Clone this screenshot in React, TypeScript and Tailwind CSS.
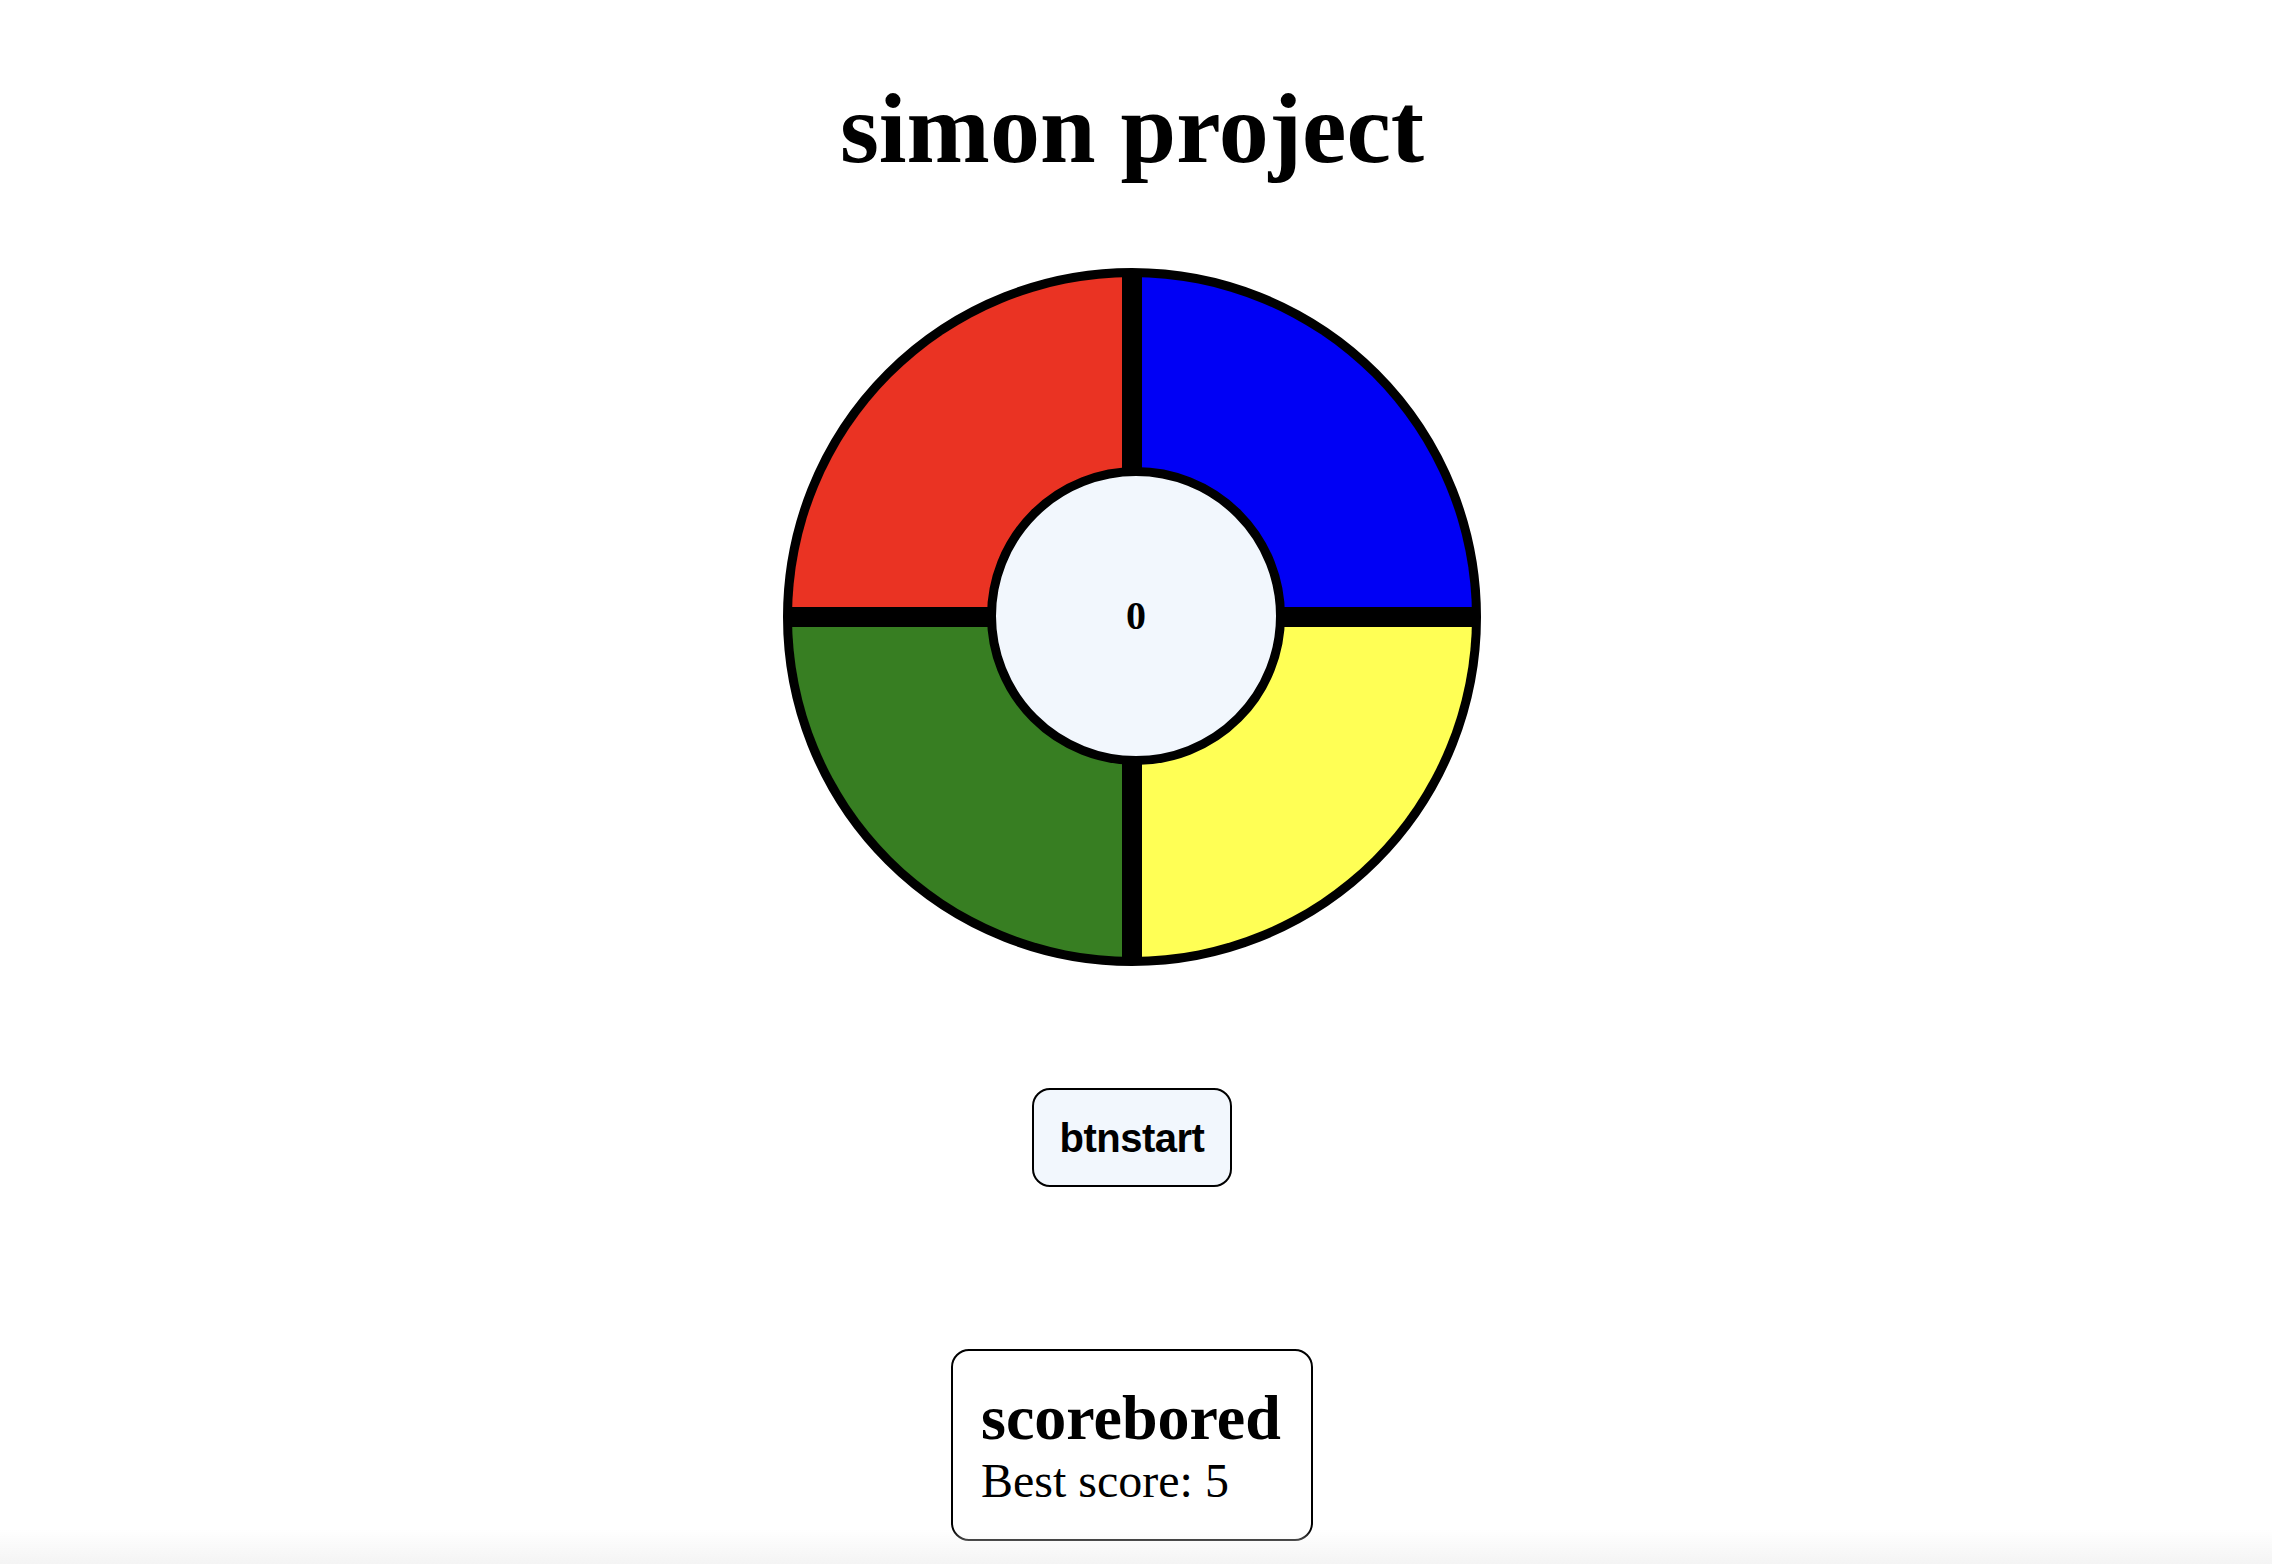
const QUADRANTS = [
  { id: 'red', color: 'bg-[#EA3323]' },
  { id: 'blue', color: 'bg-[#0000F5]' },
  { id: 'green', color: 'bg-[#377E22]' },
  { id: 'yellow', color: 'bg-[#FFFF55]' },
]

export default function App() {
  const level = 0
  const bestScore = 5

  return (
    <div className="relative min-h-screen bg-white font-['Liberation_Serif','Times_New_Roman',serif] text-black">
      <div className="flex flex-col items-center pr-2">
        <h1 className="pt-[71px] text-[100px] font-bold leading-[115px]">simon project</h1>

        <div className="relative mt-[82px] h-[698px] w-[698px] overflow-hidden rounded-full border-[9px] border-black bg-black">
          <div className="grid h-full w-full grid-cols-2 grid-rows-2 gap-[20px]">
            {QUADRANTS.map((q) => (
              <div key={q.id} className={q.color} />
            ))}
          </div>
          <div className="absolute left-[195px] top-[190px] flex h-[298px] w-[298px] items-center justify-center rounded-full border-[9px] border-black bg-[#F2F7FD]">
            <span className="text-[40px] font-bold">{level}</span>
          </div>
        </div>

        <button className="mt-[122px] h-[99px] w-[200px] rounded-[18px] border-2 border-black bg-[#F2F7FD] font-['Liberation_Sans',Arial,sans-serif] text-[40px] font-bold tracking-[-0.5px] text-black">
          btnstart
        </button>

        <div className="mt-[162px] h-[192px] w-[362px] rounded-[18px] border-2 border-black bg-white pl-[28px] pt-[31px]">
          <h2 className="text-[64px] font-bold leading-[72px]">scorebored</h2>
          <p className="text-[48px] leading-[54px]">Best score: {bestScore}</p>
        </div>
      </div>

      <div className="pointer-events-none fixed inset-x-0 bottom-0 h-[34px] bg-linear-to-b from-white/0 to-[#f4f4f4]" />
    </div>
  )
}
